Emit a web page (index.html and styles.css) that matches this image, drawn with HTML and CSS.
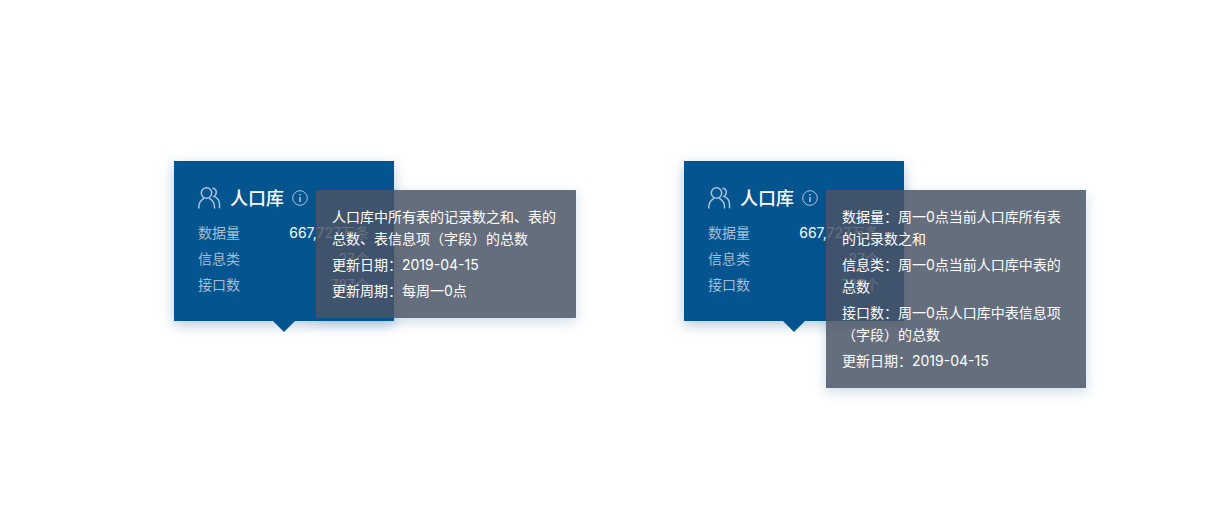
FILE: index.html
```html
<!DOCTYPE html>
<html lang="zh-CN">
<head>
  <meta charset="UTF-8" />
  <title>人口库</title>
  <link rel="stylesheet" href="styles.css">
</head>
<body>
  <div class="page">
    <div class="card">
      <div class="card-title">
        <svg class="icon-users" viewBox="0 0 24 24" width="24" height="24" fill="none" stroke="#a9c6de" stroke-width="1.5" stroke-linecap="round">
          <circle cx="8.500" cy="7" r="5.200" />
          <path d="M.8 22v-1c0-3.800 2.400-6.800 4.800-8.300M16.500 22v-1c0-3.800-2.400-6.800-4.800-8.300" />
          <path d="M15 2.300c2.200.5 3.500 2.500 3.200 4.800-.2 1.500-1 2.600-2.200 3.300 3.300 1.300 5.500 4.300 5.500 7.800v3.500" />
        </svg>
        <span class="name">人口库</span>
        <svg class="icon-info" viewBox="0 0 16 16" width="16" height="16" fill="none" stroke="#a9c6de">
          <circle cx="8" cy="8" r="7.300" />
          <path d="M8 7v5" stroke-width="1.500" />
          <path d="M8 4v1.500" stroke-width="1.500" />
        </svg>
      </div>
      <div class="row"><span class="label">数据量</span><span class="value">667,727万条</span></div>
      <div class="row"><span class="label">信息类</span><span class="value">27个</span></div>
      <div class="row"><span class="label">接口数</span><span class="value">787个</span></div>
      <div class="tip">
        <p>人口库中所有表的记录数之和、表的总数、表信息项（字段）的总数</p>
        <p>更新日期：2019-04-15</p>
        <p>更新周期：每周一0点</p>
      </div>
    </div>

    <div class="card">
      <div class="card-title">
        <svg class="icon-users" viewBox="0 0 24 24" width="24" height="24" fill="none" stroke="#a9c6de" stroke-width="1.5" stroke-linecap="round">
          <circle cx="8.500" cy="7" r="5.200" />
          <path d="M.8 22v-1c0-3.800 2.400-6.800 4.800-8.300M16.500 22v-1c0-3.800-2.400-6.800-4.800-8.300" />
          <path d="M15 2.300c2.200.5 3.500 2.500 3.200 4.800-.2 1.500-1 2.600-2.200 3.300 3.300 1.300 5.500 4.300 5.500 7.800v3.500" />
        </svg>
        <span class="name">人口库</span>
        <svg class="icon-info" viewBox="0 0 16 16" width="16" height="16" fill="none" stroke="#a9c6de">
          <circle cx="8" cy="8" r="7.300" />
          <path d="M8 7v5" stroke-width="1.500" />
          <path d="M8 4v1.500" stroke-width="1.500" />
        </svg>
      </div>
      <div class="row"><span class="label">数据量</span><span class="value">667,727万条</span></div>
      <div class="row"><span class="label">信息类</span><span class="value">27个</span></div>
      <div class="row"><span class="label">接口数</span><span class="value">787个</span></div>
      <div class="tip">
        <p>数据量：周一0点当前人口库所有表的记录数之和</p>
        <p>信息类：周一0点当前人口库中表的总数</p>
        <p>接口数：周一0点人口库中表信息项（字段）的总数</p>
        <p>更新日期：2019-04-15</p>
      </div>
    </div>
  </div>
</body>
</html>
```

FILE: styles.css
```css
* {
  box-sizing: border-box;
}

body {
  margin: 0;
  background-color: #fff;
  font-family: Inter, "Noto Sans CJK SC", sans-serif;
  font-size: 14px;
  color: #fff;
}

.page {
  display: flex;
  gap: 290px;
  height: 521px;
  padding: 161px 0 0 174px;
}

.card {
  position: relative;
  width: 220px;
  height: 160px;
  padding: 24px 24px 0;
  background-color: #04548f;
  box-shadow: 0 4px 12px rgba(4, 84, 143, 0.3);
}

/* little arrow under the card */
.card::after {
  content: "";
  position: absolute;
  left: 99px;
  bottom: -11px;
  border-top: 11px solid #04548f;
  border-left: 11px solid transparent;
  border-right: 11px solid transparent;
}

.card-title {
  display: flex;
  align-items: center;
  height: 26px;
  margin-bottom: 9px;
}

.name {
  margin-left: 8px;
  padding-top: 1px;
  font-size: 18px;
  font-weight: 500;
  line-height: 26px;
}

.icon-info {
  margin-left: 8px;
}

.row {
  display: flex;
  justify-content: space-between;
  width: 171px;
  height: 26px;
  line-height: 26px;
}

.label {
  color: #a4bdd2;
}

.tip {
  position: absolute;
  left: 142px;
  top: 29px;
  width: 260px;
  padding: 16px;
  background-color: rgba(74, 85, 102, 0.85);
  box-shadow: 0 4px 12px rgba(4, 84, 143, 0.2);
  z-index: 2;
}

.tip p {
  margin: 0 0 4px;
  line-height: 22px;
}

.tip p:last-child {
  margin-bottom: 0;
}
```
